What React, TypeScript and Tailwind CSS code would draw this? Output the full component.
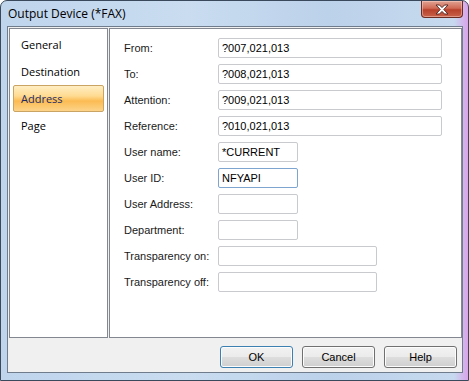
import * as React from 'react';

const navItems = ['General', 'Destination', 'Address', 'Page'];

const fields = [
  { label: 'From:', value: '?007,021,013', width: 'w-[224px]' },
  { label: 'To:', value: '?008,021,013', width: 'w-[224px]' },
  { label: 'Attention:', value: '?009,021,013', width: 'w-[224px]' },
  { label: 'Reference:', value: '?010,021,013', width: 'w-[224px]' },
  { label: 'User name:', value: '*CURRENT', width: 'w-[80px]' },
  { label: 'User ID:', value: 'NFYAPI', width: 'w-[80px]', focused: true },
  { label: 'User Address:', value: '', width: 'w-[80px]' },
  { label: 'Department:', value: '', width: 'w-[80px]' },
  { label: 'Transparency on:', value: '', width: 'w-[159px]' },
  { label: 'Transparency off:', value: '', width: 'w-[159px]' },
];

const CloseButton: React.FC = () => (
  <div className="flex h-[17px] w-[42px] items-center justify-center rounded-b-[4px] border border-t-0 border-[#6b2a22] bg-[linear-gradient(#e0a393,#cf6a55_45%,#b8412c_55%,#c8624a)] shadow-[inset_0_0_0_1px_rgba(255,220,210,0.45)]">
    <svg width="14" height="11" viewBox="0 0 14 11">
      <path
        d="M1 1 H4.5 L7 3.6 L9.5 1 H13 L8.8 5.5 L13 10 H9.5 L7 7.4 L4.5 10 H1 L5.2 5.5 Z"
        fill="#ffffff"
        stroke="#5b2a24"
        strokeWidth="1"
        strokeLinejoin="round"
      />
    </svg>
  </div>
);

const DialogButton: React.FC<{ label: string; isDefault?: boolean }> = ({ label, isDefault }) => (
  <button
    className={`h-[22px] w-[73px] rounded-[3px] border text-[11px] text-black bg-[linear-gradient(#f2f2f2,#ebebeb_50%,#dddddd_51%,#cfcfcf)] shadow-[inset_0_0_0_1px_#fcfcfc] ${
      isDefault ? 'border-[#3c7fb1]' : 'border-[#707070]'
    }`}
    style={{ fontFamily: '"Liberation Sans", Arial, sans-serif' }}
  >
    {label}
  </button>
);

export default function App() {
  return (
    <div className="h-[381px] w-[469px] overflow-hidden bg-white">
      <div className="flex h-[381px] w-[469px] flex-col rounded-t-[7px] border border-[#3a4a5c] bg-[linear-gradient(90deg,#bfd5ec,#c9dcf0_40%,#bcd2ea_70%,#c6d9ee_97%,#d9a4ea)]">
        {/* Title bar */}
        <div className="flex h-[25px] items-start justify-between pl-[7px] pr-[5px]">
          <span
            className="mt-[4px] text-[12px] text-black"
            style={{ fontFamily: '"Open Sans", "Noto Sans", sans-serif' }}
          >
            Output Device (*FAX)
          </span>
          <CloseButton />
        </div>

        {/* Client area */}
        <div className="ml-[6px] flex h-[347px] w-[456px] flex-col border border-[#6e7c8c] bg-[#f0f0f0]">
          <div className="mt-px flex h-[310px] gap-px pl-px">
            {/* Navigation */}
            <div
              className="flex w-[99px] flex-col border border-[#828790] bg-white px-[3px] pt-[2px] text-[11px]"
              style={{ fontFamily: '"Open Sans", "Noto Sans", sans-serif' }}
            >
              {navItems.map((item) => (
                <div
                  key={item}
                  className={`flex h-[27px] items-center rounded-[2px] pl-[7px] pt-px ${
                    item === 'Address'
                      ? 'border border-[#c9a462] bg-[linear-gradient(#ffeec4,#ffdb91_40%,#fbbb52_60%,#fdd48a)] text-[#1b2a66]'
                      : 'border border-transparent text-black'
                  }`}
                >
                  {item}
                </div>
              ))}
            </div>

            {/* Fields */}
            <div
              className="flex flex-1 flex-col gap-[6px] border border-[#828790] bg-white pl-[14px] pt-[9px] text-[11px]"
              style={{ fontFamily: '"Liberation Sans", Arial, sans-serif' }}
            >
              {fields.map((f) => (
                <div key={f.label} className="flex h-[20px] items-center">
                  <span className="w-[94px] text-[#1a1a1a]">{f.label}</span>
                  <div
                    className={`flex h-[20px] items-center rounded-[2px] border pl-[3px] text-black ${f.width} ${
                      f.focused ? 'border-[#7ea5d0]' : 'border-[#c9cacd]'
                    }`}
                  >
                    {f.value}
                  </div>
                </div>
              ))}
            </div>
          </div>

          {/* Buttons */}
          <div className="flex justify-end gap-[9px] pr-[5px] pt-[8px]">
            <DialogButton label="OK" isDefault />
            <DialogButton label="Cancel" />
            <DialogButton label="Help" />
          </div>
        </div>
      </div>
    </div>
  );
}
